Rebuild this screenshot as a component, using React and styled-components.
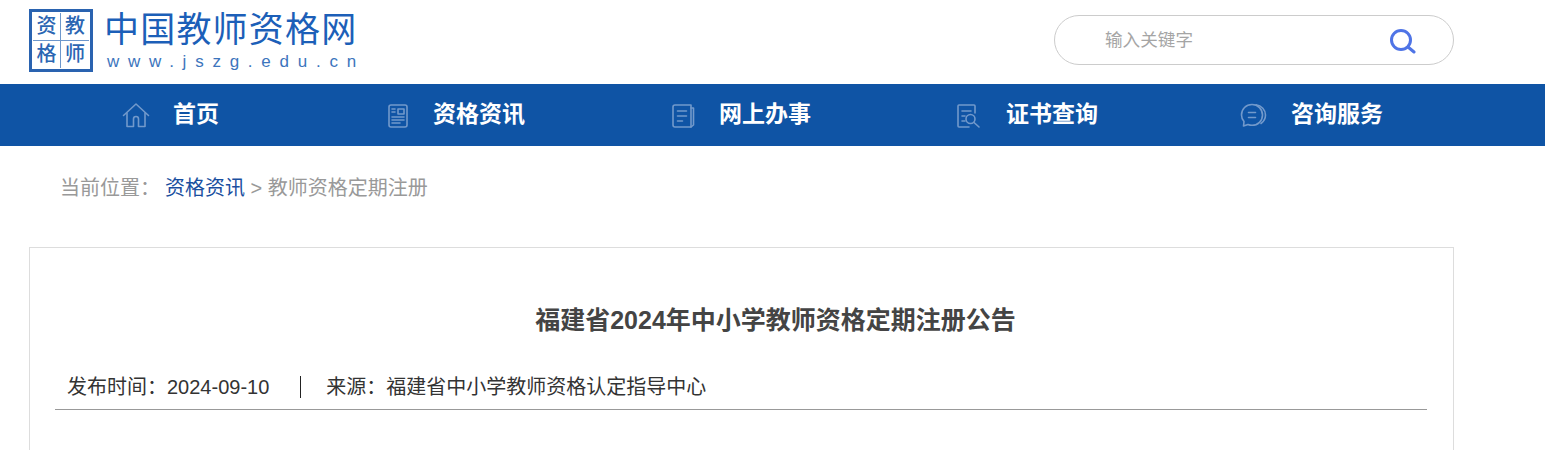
import React from "react";
import styled, { createGlobalStyle } from "styled-components";

const GlobalStyle = createGlobalStyle`
  html, body {
    margin: 0;
    padding: 0;
    height: 450px;
    overflow: hidden;
    background: #fff;
    font-family: "Liberation Sans", "Noto Sans CJK SC", sans-serif;
  }
  * { box-sizing: border-box; }
`;

const Container = styled.div`
  width: 1425px;
  margin-left: 29px;
`;

const Header = styled(Container)`
  height: 84px;
  display: flex;
  justify-content: space-between;
  align-items: flex-start;
`;

const Logo = styled.a`
  display: flex;
  margin-top: 9px;
  gap: 11px;
  color: #1a5cb4;
`;

const LogoBox = styled.div`
  width: 64px;
  height: 63px;
  border: 3px solid #2a63b0;
  padding: 1px;
  display: grid;
  grid-template-columns: 1fr 1fr;
  grid-template-rows: 1fr 1fr;
`;

const LogoCell = styled.span`
  display: flex;
  align-items: center;
  justify-content: center;
  font-size: 20px;
  font-weight: 500;
  line-height: 1;
  color: #2b66b3;
  border-right: ${(p) => (p.$right ? "1px solid #6d97cc" : "none")};
  border-bottom: ${(p) => (p.$bottom ? "1px solid #6d97cc" : "none")};
`;

const LogoText = styled.div`
  display: flex;
  flex-direction: column;
`;

const LogoTitle = styled.div`
  font-size: 35px;
  line-height: 41px;
  letter-spacing: 1.2px;
  height: 44px;
  color: #1c5fb8;
  white-space: nowrap;
`;

const LogoUrl = styled.div`
  font-size: 17px;
  line-height: 17px;
  letter-spacing: 8.75px;
  margin-left: 3px;
  color: #3c75bd;
  white-space: nowrap;
`;

const Search = styled.form`
  width: 400px;
  height: 50px;
  margin-top: 15px;
  border: 1px solid #ccc;
  border-radius: 25px;
  display: flex;
  align-items: center;
  padding: 0 37px 0 50px;
`;

const SearchInput = styled.input`
  flex: 1;
  min-width: 0;
  border: 0;
  outline: 0;
  padding: 0;
  background: transparent;
  font: 17.6px "Liberation Sans", "Noto Sans CJK SC", sans-serif;
  &::placeholder {
    color: #a5a5a5;
    opacity: 1;
  }
`;

const SearchIcon = styled.svg`
  width: 27px;
  height: 26px;
  margin-top: 2px;
  display: block;
  flex: none;
`;

const NavBar = styled.nav`
  height: 62px;
  background: #0f54a5;
`;

const NavList = styled(Container)`
  height: 100%;
  display: grid;
  grid-template-columns: repeat(5, 1fr);
`;

const NavItem = styled.a`
  display: flex;
  align-items: center;
  padding-left: ${(p) => p.$pad}px;
  gap: ${(p) => p.$gap}px;
  color: #fff;
  font-size: 23px;
  font-weight: 700;
  white-space: nowrap;
  cursor: pointer;
`;

const NavLabel = styled.span`
  margin-top: -7px;
`;

const NavIcon = styled.svg`
  width: 28px;
  height: 28px;
  display: block;
  flex: none;
  fill: none;
  stroke: #7299cb;
  stroke-width: 1.6;
  stroke-linecap: round;
  stroke-linejoin: round;
`;

const Crumbs = styled.div`
  height: 101px;
  padding: 29px 0 0 60px;
  font-size: 20px;
  line-height: 26px;
  color: #999;
`;

const CrumbLabel = styled.span`
  margin-right: 5px;
`;

const CrumbLink = styled.a`
  color: #1a4f9f;
`;

const Card = styled(Container)`
  height: 203px;
  border: 1px solid #ddd;
  border-bottom: 0;
  padding: 0 26px 0 25px;
`;

const Title = styled.h1`
  margin: 0;
  padding: 54px 0 0 69px;
  height: 122px;
  text-align: center;
  font-size: 25px;
  line-height: 36px;
  font-weight: 700;
  color: #444;
`;

const Meta = styled.div`
  height: 40px;
  padding: 0 0 0 12px;
  border-bottom: 1px solid #999;
  display: flex;
  align-items: flex-start;
  font-size: 20px;
  line-height: 34px;
  color: #333;
`;

const MetaDivider = styled.i`
  display: block;
  width: 1px;
  height: 22px;
  margin: 6px 25px 0 31px;
  background: #222;
`;

const LogoCells = [
  { text: "资", right: true, bottom: true },
  { text: "教", bottom: true },
  { text: "格", right: true },
  { text: "师" },
];

const navItems = [
  {
    label: "首页",
    pad: 93,
    gap: 23,
    icon: (
      <>
        <path d="M1.5 14.5 14 3l12.500 11.500" />
        <path d="M5 12v13.500h6.500V18a2.500 2.500 0 0 1 5 0v7.500H23V12" />
      </>
    ),
  },
  {
    label: "资格资讯",
    pad: 70,
    gap: 21,
    icon: (
      <>
        <rect x="5" y="4" width="18" height="22" rx="2" />
        <rect x="14" y="8" width="6" height="5" />
        <path d="M8 8h3M8 11h3M8 16h12M8 19h12M8 22h8" />
      </>
    ),
  },
  {
    label: "网上办事",
    pad: 70,
    gap: 22,
    icon: (
      <>
        <path d="M6 4h16v22H6a2 2 0 0 1-2-2V6a2 2 0 0 1 2-2Z" />
        <path d="M22 7h2.500v17L22 26" />
        <path d="M8.500 10h9M8.500 15h9M8.500 20h5" />
      </>
    ),
  },
  {
    label: "证书查询",
    pad: 70,
    gap: 24,
    icon: (
      <>
        <path d="M21 12V5a1 1 0 0 0-1-1H5a1 1 0 0 0-1 1v20a1 1 0 0 0 1 1h10" />
        <path d="M8 10h9M8 15h3M8 20h3" />
        <circle cx="16.500" cy="18" r="4.500" />
        <path d="m20 21.500 5 4.500" />
      </>
    ),
  },
  {
    label: "咨询服务",
    pad: 70,
    gap: 24,
    icon: (
      <>
        <path d="M13 3.500C7 3.500 2.500 8 2.500 14c0 2.500 1 4.800 2.500 6.500L4.500 25l4.500-1.500c1.200.5 2.600.8 4 .8 6 0 10.500-4.500 10.500-10.300S19 3.500 13 3.500Z" />
        <path d="M17 3.800c5.500.7 9.500 5 9.500 10.200 0 3.600-1.800 6.500-4.500 8.500" />
        <path d="M9.500 11.500h7M9.500 16.500h7" />
      </>
    ),
  },
];

const App = () => {
  return (
    <>
      <GlobalStyle />
      <Header>
        <Logo>
          <LogoBox>
            {LogoCells.map((c) => (
              <LogoCell key={c.text} $right={c.right} $bottom={c.bottom}>
                {c.text}
              </LogoCell>
            ))}
          </LogoBox>
          <LogoText>
            <LogoTitle>中国教师资格网</LogoTitle>
            <LogoUrl>www.jszg.edu.cn</LogoUrl>
          </LogoText>
        </Logo>
        <Search>
          <SearchInput placeholder="输入关键字" />
          <SearchIcon viewBox="0 0 27 26" fill="none" stroke="#4f74e6" strokeWidth="3" strokeLinecap="round">
            <circle cx="12" cy="12" r="9.500" />
            <path d="m19 19 6 5" />
          </SearchIcon>
        </Search>
      </Header>
      <NavBar>
        <NavList>
          {navItems.map((item) => (
            <NavItem key={item.label} $pad={item.pad} $gap={item.gap}>
              <NavIcon viewBox="0 0 28 28">{item.icon}</NavIcon>
              <NavLabel>{item.label}</NavLabel>
            </NavItem>
          ))}
        </NavList>
      </NavBar>
      <Crumbs>
        <CrumbLabel>当前位置：</CrumbLabel>
        <CrumbLink>资格资讯</CrumbLink> &gt; 教师资格定期注册
      </Crumbs>
      <Card>
        <Title>福建省2024年中小学教师资格定期注册公告</Title>
        <Meta>
          <span>发布时间：2024-09-10</span>
          <MetaDivider />
          <span>来源：福建省中小学教师资格认定指导中心</span>
        </Meta>
      </Card>
    </>
  );
};

export default App;
